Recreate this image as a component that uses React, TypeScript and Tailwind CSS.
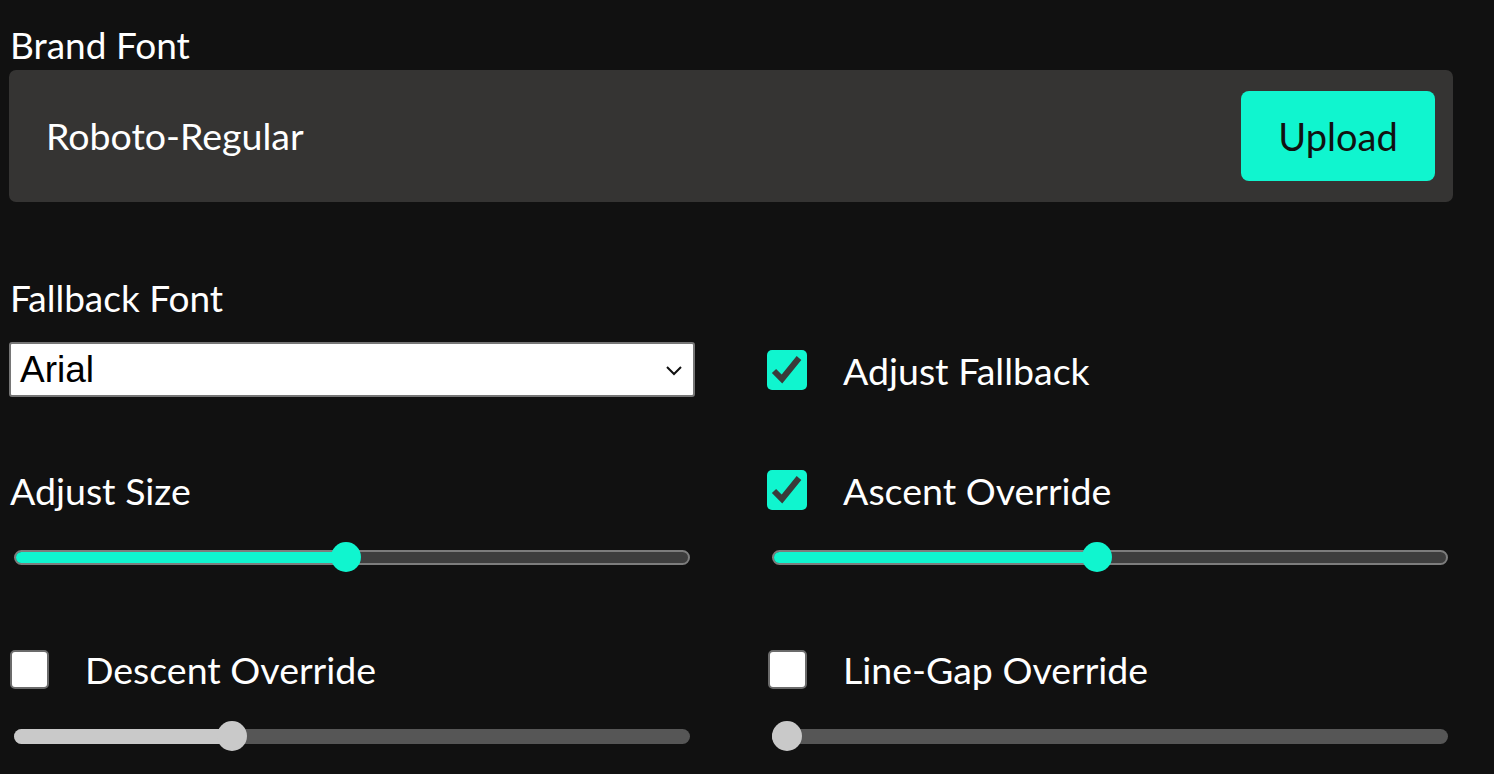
import React from "react";

const font = { fontFamily: "Lato, 'Noto Sans', sans-serif" };

function Check({ checked }: { checked: boolean }) {
  if (!checked) {
    return <div className="w-[39px] h-[39px] shrink-0 rounded-[5px] bg-white border-2 border-[#6b6b6b]" />;
  }
  return (
    <div className="w-[40px] h-[40px] shrink-0 rounded-[5px] bg-[#10f5cf] flex items-center justify-center">
      <svg width="40" height="40" viewBox="0 0 40 40">
        <polyline points="7,21 15,29 32,8" fill="none" stroke="#3a3a3a" strokeWidth="6" strokeLinejoin="miter" />
      </svg>
    </div>
  );
}

function Slider({ value, enabled }: { value: number; enabled: boolean }) {
  // track is 676 wide, thumb is 30; value is 0..1
  const center = 15 + value * 646;
  return (
    <div className="relative h-[32px] w-[676px] ml-[5px] flex items-center">
      <div
        className={
          enabled
            ? "relative w-full h-[15px] rounded-full bg-[#3e3e3e] border-2 border-[#7d7d7d] overflow-hidden"
            : "relative w-full h-[15px] rounded-full bg-[#565656] overflow-hidden"
        }
      >
        <div
          className={enabled ? "h-full bg-[#10f5cf]" : "h-full bg-[#c9c9c9]"}
          style={{ width: center }}
        />
      </div>
      <div
        className={
          enabled
            ? "absolute top-[1px] w-[30px] h-[30px] rounded-full bg-[#10f5cf]"
            : "absolute top-[1px] w-[30px] h-[30px] rounded-full bg-[#c9c9c9]"
        }
        style={{ left: center - 15 }}
      />
    </div>
  );
}

function CheckRow({ label, checked }: { label: string; checked: boolean }) {
  return (
    <div className="h-[44px] flex items-center">
      <Check checked={checked} />
      <span className="ml-[36px] mt-[2px] text-[37.5px] text-white leading-none">{label}</span>
    </div>
  );
}

export default function App() {
  return (
    <div className="min-h-screen w-full bg-[#111111] text-white" style={font}>
      <div className="w-[1444px] ml-[9px] pt-[24px]">
        <div className="h-[42px] leading-[42px] text-[37px] pl-[1px]">Brand Font</div>
        <div className="mt-[4px] h-[132px] rounded-[7px] bg-[#353433] flex items-center justify-between pl-[37px] pr-[18px]">
          <span className="text-[37.5px] text-white">Roboto-Regular</span>
          <button className="w-[194px] h-[90px] rounded-[8px] bg-[#10f5cf] text-[#111] text-[38px]">Upload</button>
        </div>

        <div className="mt-[75px] grid grid-cols-2 gap-x-[72px]">
          <div>
            <div className="h-[42px] leading-[42px] text-[37px] pl-[1px]">Fallback Font</div>
            <div
              className="mt-[23px] h-[55px] bg-white border-2 border-[#767676] rounded-[3px] flex items-center justify-between pl-[9px] pr-[10px] text-black text-[37px]"
              style={{ fontFamily: "'Liberation Sans', Arial, sans-serif" }}
            >
              <span>Arial</span>
              <svg width="18" height="12" viewBox="0 0 18 12">
                <polyline points="2,3 9,10 16,3" fill="none" stroke="#111" strokeWidth="2" />
              </svg>
            </div>
          </div>
          <div className="flex items-end">
            <div className="h-[55px] flex items-center">
              <CheckRow label="Adjust Fallback" checked />
            </div>
          </div>
        </div>

        <div className="mt-[71px] grid grid-cols-2 gap-x-[72px]">
          <div>
            <div className="h-[44px] flex items-center text-[37.5px] pl-[1px] pt-[2px]">Adjust Size</div>
            <div className="mt-[29px]">
              <Slider value={0.49} enabled />
            </div>
          </div>
          <div>
            <CheckRow label="Ascent Override" checked />
            <div className="mt-[29px]">
              <Slider value={0.48} enabled />
            </div>
          </div>
        </div>

        <div className="mt-[74px] grid grid-cols-2 gap-x-[72px]">
          <div className="pl-[1px]">
            <CheckRow label="Descent Override" checked={false} />
            <div className="mt-[29px] -ml-[1px]">
              <Slider value={0.314} enabled={false} />
            </div>
          </div>
          <div className="pl-[1px]">
            <CheckRow label="Line-Gap Override" checked={false} />
            <div className="mt-[29px] -ml-[1px]">
              <Slider value={0} enabled={false} />
            </div>
          </div>
        </div>
      </div>
    </div>
  );
}
